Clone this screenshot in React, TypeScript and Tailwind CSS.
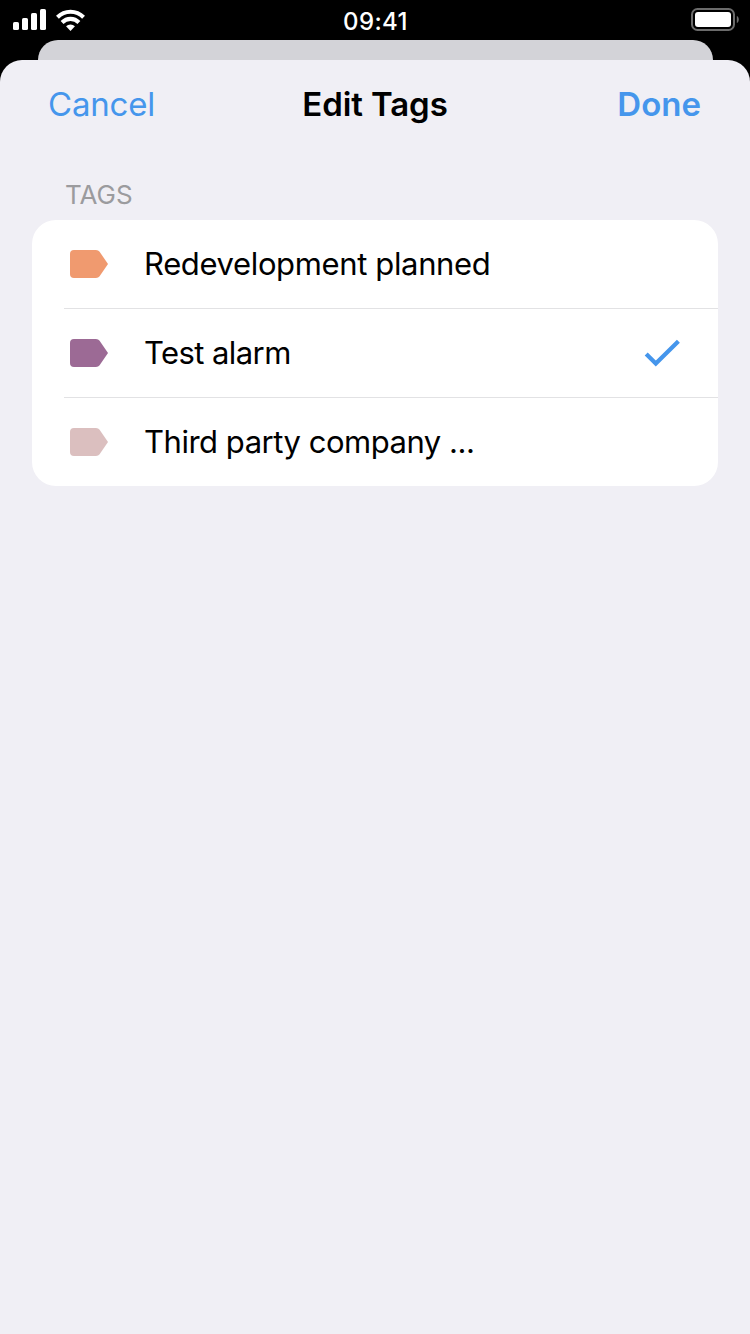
import clsx from "clsx";

interface Tag {
  name: string;
  color: string;
  selected: boolean;
  textClass: string;
}

const tags: Tag[] = [
  { name: "Redevelopment planned", color: "text-[#f09a6f]", selected: false, textClass: "tracking-[-0.36px]" },
  { name: "Test alarm", color: "text-[#9c6a95]", selected: true, textClass: "tracking-[-0.58px]" },
  { name: "Third party company ...", color: "text-[#dbbfbf]", selected: false, textClass: "tracking-[-0.48px]" },
];

const SignalIcon = () => (
  <svg width="34" height="22" viewBox="0 0 34 22" fill="white">
    <rect x="0" y="13" width="6" height="8" rx="1.6" />
    <rect x="9" y="9" width="6" height="12" rx="1.6" />
    <rect x="18" y="4" width="6" height="17" rx="1.6" />
    <rect x="27" y="0" width="6" height="21" rx="1.6" />
  </svg>
);

const WifiIcon = () => (
  <svg width="29" height="22" viewBox="0 0 30 22" fill="none" stroke="white" strokeWidth="4.2" preserveAspectRatio="none">
    <path d="M1.5 8.3a19.2 19.2 0 0 1 27 0" />
    <path d="M6.3 13.4a12.3 12.3 0 0 1 17.4 0" />
    <path d="M15 22l-4.6-4.7a6.6 6.6 0 0 1 9.2 0z" fill="white" stroke="none" />
  </svg>
);

const BatteryIcon = () => (
  <svg width="50" height="24" viewBox="0 0 50 24" fill="none">
    <rect x="1" y="1" width="42" height="21" rx="5.5" stroke="#6b6b6b" strokeWidth="2" />
    <rect x="4" y="4" width="36" height="15" rx="3" fill="white" />
    <path d="M45.800 8c1.500.6 2 2 2 3.500s-.5 2.900-2 3.500z" fill="#6b6b6b" />
  </svg>
);

const TagIcon = ({ className }: { className: string }) => (
  <svg width="38" height="28" viewBox="0 0 38 28" fill="currentColor" className={className}>
    <path d="M4 0h22q2.300 0 3.600 1.800L38 14l-8.400 12.200q-1.300 1.800-3.600 1.800H4a4 4 0 0 1-4-4V4a4 4 0 0 1 4-4z" />
  </svg>
);

const CheckIcon = () => (
  <svg width="36" height="28" viewBox="0 0 36 28" fill="none" stroke="#4596ec" strokeWidth="4.2">
    <path d="M2.200 15l9.600 9.600L34.400 2.200" />
  </svg>
);

const StatusBar = () => (
  <div className="grid grid-cols-3 h-10 bg-black text-white">
    <div className="flex gap-[9px] pl-[13px] pt-[9px]">
      <SignalIcon />
      <WifiIcon />
    </div>
    <div className="pl-px text-center text-[24px] leading-[43px] font-medium tracking-[0.4px]">09:41</div>
    <div className="flex justify-end pt-2 pr-[9px]">
      <BatteryIcon />
    </div>
  </div>
);

const TagRow = ({ tag }: { tag: Tag }) => (
  <li className="group flex items-center pl-8">
    <div className="flex items-center flex-1 h-[89px] pl-[6px] pr-[38px] border-b border-[#e2e2e4] group-last:h-[88px] group-last:border-b-0">
      <TagIcon className={tag.color} />
      <span className={clsx("flex-1 ml-9 text-[31px] leading-10 whitespace-nowrap", tag.textClass)}>{tag.name}</span>
      {tag.selected && <CheckIcon />}
    </div>
  </li>
);

export default function App() {
  return (
    <div className="flex flex-col h-[1334px] w-[750px] bg-black font-['Inter',sans-serif] text-black overflow-hidden">
      <StatusBar />
      <div className="h-5 ml-[38px] mr-[37px] rounded-t-[20px] bg-[#d3d3d8]" />
      <main className="flex-1 rounded-t-[22px] bg-[#f0eff5]">
        <header className="grid grid-cols-3 items-center h-[90px] px-12 text-[33px]">
          <button className="text-left tracking-[-0.2px] text-[#4596ec]">Cancel</button>
          <h1 className="text-center font-[560] tracking-[-0.1px] whitespace-nowrap">Edit Tags</h1>
          <button className="pr-px text-right font-[560] text-[#4596ec]">Done</button>
        </header>
        <section className="px-8 pt-[25px]">
          <h2 className="h-[45px] pl-[33px] text-[26px] leading-10 text-[#9b9b9e]">TAGS</h2>
          <ul className="rounded-[24px] bg-white">
            {tags.map((tag) => (
              <TagRow key={tag.name} tag={tag} />
            ))}
          </ul>
        </section>
      </main>
    </div>
  );
}
